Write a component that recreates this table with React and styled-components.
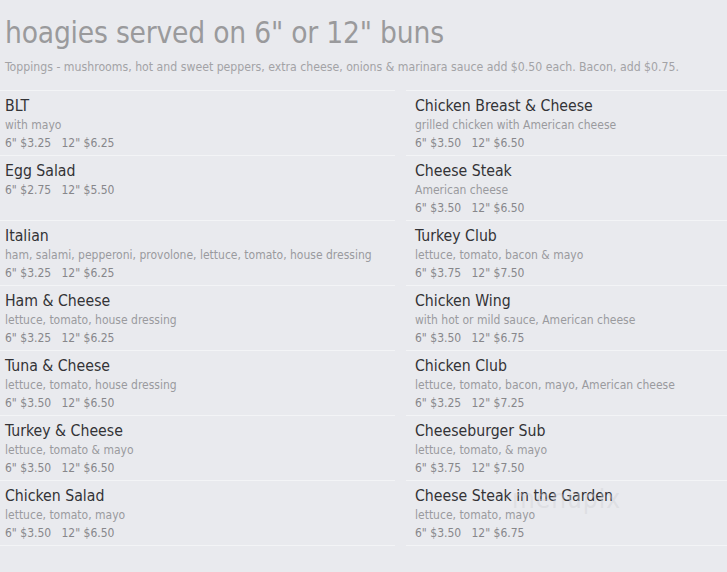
import React from 'react';
import styled, { createGlobalStyle } from 'styled-components';

const Global = createGlobalStyle`
  html, body {
    margin: 0;
    padding: 0;
    background: #e9eaee;
  }
  body {
    font-family: Tahoma, "DejaVu Sans Condensed", "DejaVu Sans", sans-serif;
    width: 727px;
    height: 572px;
    overflow: hidden;
  }
`;

const Page = styled.div`
  position: relative;
`;

const Heading = styled.h1`
  margin: 0;
  padding: 16px 0 0 5px;
  font-size: 29.6px;
  font-weight: normal;
  color: #9a9a9c;
  line-height: 34px;
  letter-spacing: -0.2px;
`;

const Toppings = styled.p`
  margin: 0;
  padding: 9px 0 0 5px;
  font-size: 12.2px;
  color: #a3a3a6;
  line-height: 16px;
`;

const Grid = styled.div`
  display: grid;
  grid-template-columns: 395px 1fr;
  column-gap: 11px;
  margin-top: 15px;
`;

const Item = styled.div`
  height: 65px;
  border-top: 1px solid #f3f4f6;
  padding: 5px 0 0 ${p => (p.$right ? '9px' : '5px')};
  box-sizing: border-box;
  ${p => p.$last && 'border-bottom: 1px solid #f3f4f6; height: 66px;'}
`;

const Name = styled.div`
  font-size: 15.7px;
  color: #333336;
  line-height: 20px;
`;

const Desc = styled.div`
  font-size: 12px;
  color: #9a9a9e;
  line-height: 18px;
`;

const Price = styled.div`
  font-size: 12px;
  color: #87878b;
  line-height: 18px;
  white-space: pre;
`;

const Watermark = styled.div`
  position: absolute;
  left: 512px;
  top: 484px;
  font-size: 26px;
  color: rgba(205, 205, 209, 0.4);
  letter-spacing: 1px;
  pointer-events: none;
`;

const left = [
  { name: 'BLT', desc: 'with mayo', p6: '$3.25', p12: '$6.25' },
  { name: 'Egg Salad', p6: '$2.75', p12: '$5.50' },
  { name: 'Italian', desc: 'ham, salami, pepperoni, provolone, lettuce, tomato, house dressing', p6: '$3.25', p12: '$6.25' },
  { name: 'Ham & Cheese', desc: 'lettuce, tomato, house dressing', p6: '$3.25', p12: '$6.25' },
  { name: 'Tuna & Cheese', desc: 'lettuce, tomato, house dressing', p6: '$3.50', p12: '$6.50' },
  { name: 'Turkey & Cheese', desc: 'lettuce, tomato & mayo', p6: '$3.50', p12: '$6.50' },
  { name: 'Chicken Salad', desc: 'lettuce, tomato, mayo', p6: '$3.50', p12: '$6.50' },
];

const right = [
  { name: 'Chicken Breast & Cheese', desc: 'grilled chicken with American cheese', p6: '$3.50', p12: '$6.50' },
  { name: 'Cheese Steak', desc: 'American cheese', p6: '$3.50', p12: '$6.50' },
  { name: 'Turkey Club', desc: 'lettuce, tomato, bacon & mayo', p6: '$3.75', p12: '$7.50' },
  { name: 'Chicken Wing', desc: 'with hot or mild sauce, American cheese', p6: '$3.50', p12: '$6.75' },
  { name: 'Chicken Club', desc: 'lettuce, tomato, bacon, mayo, American cheese', p6: '$3.25', p12: '$7.25' },
  { name: 'Cheeseburger Sub', desc: 'lettuce, tomato, & mayo', p6: '$3.75', p12: '$7.50' },
  { name: 'Cheese Steak in the Garden', desc: 'lettuce, tomato, mayo', p6: '$3.50', p12: '$6.75' },
];

function MenuItem({ item, right: isRight, last }) {
  return (
    <Item $right={isRight} $last={last}>
      <Name>{item.name}</Name>
      {item.desc && <Desc>{item.desc}</Desc>}
      <Price>{`6" ${item.p6}   12" ${item.p12}`}</Price>
    </Item>
  );
}

export default function App() {
  const cells = [];
  left.forEach((l, i) => {
    const last = i === left.length - 1;
    cells.push(<MenuItem key={'l' + i} item={l} last={last} />);
    cells.push(<MenuItem key={'r' + i} item={right[i]} right last={last} />);
  });
  return (
    <Page>
      <Global />
      <Heading>hoagies served on 6" or 12" buns</Heading>
      <Toppings>
        Toppings - mushrooms, hot and sweet peppers, extra cheese, onions &amp; marinara sauce add $0.50 each. Bacon, add $0.75.
      </Toppings>
      <Grid>{cells}</Grid>
      <Watermark>menupix</Watermark>
    </Page>
  );
}
